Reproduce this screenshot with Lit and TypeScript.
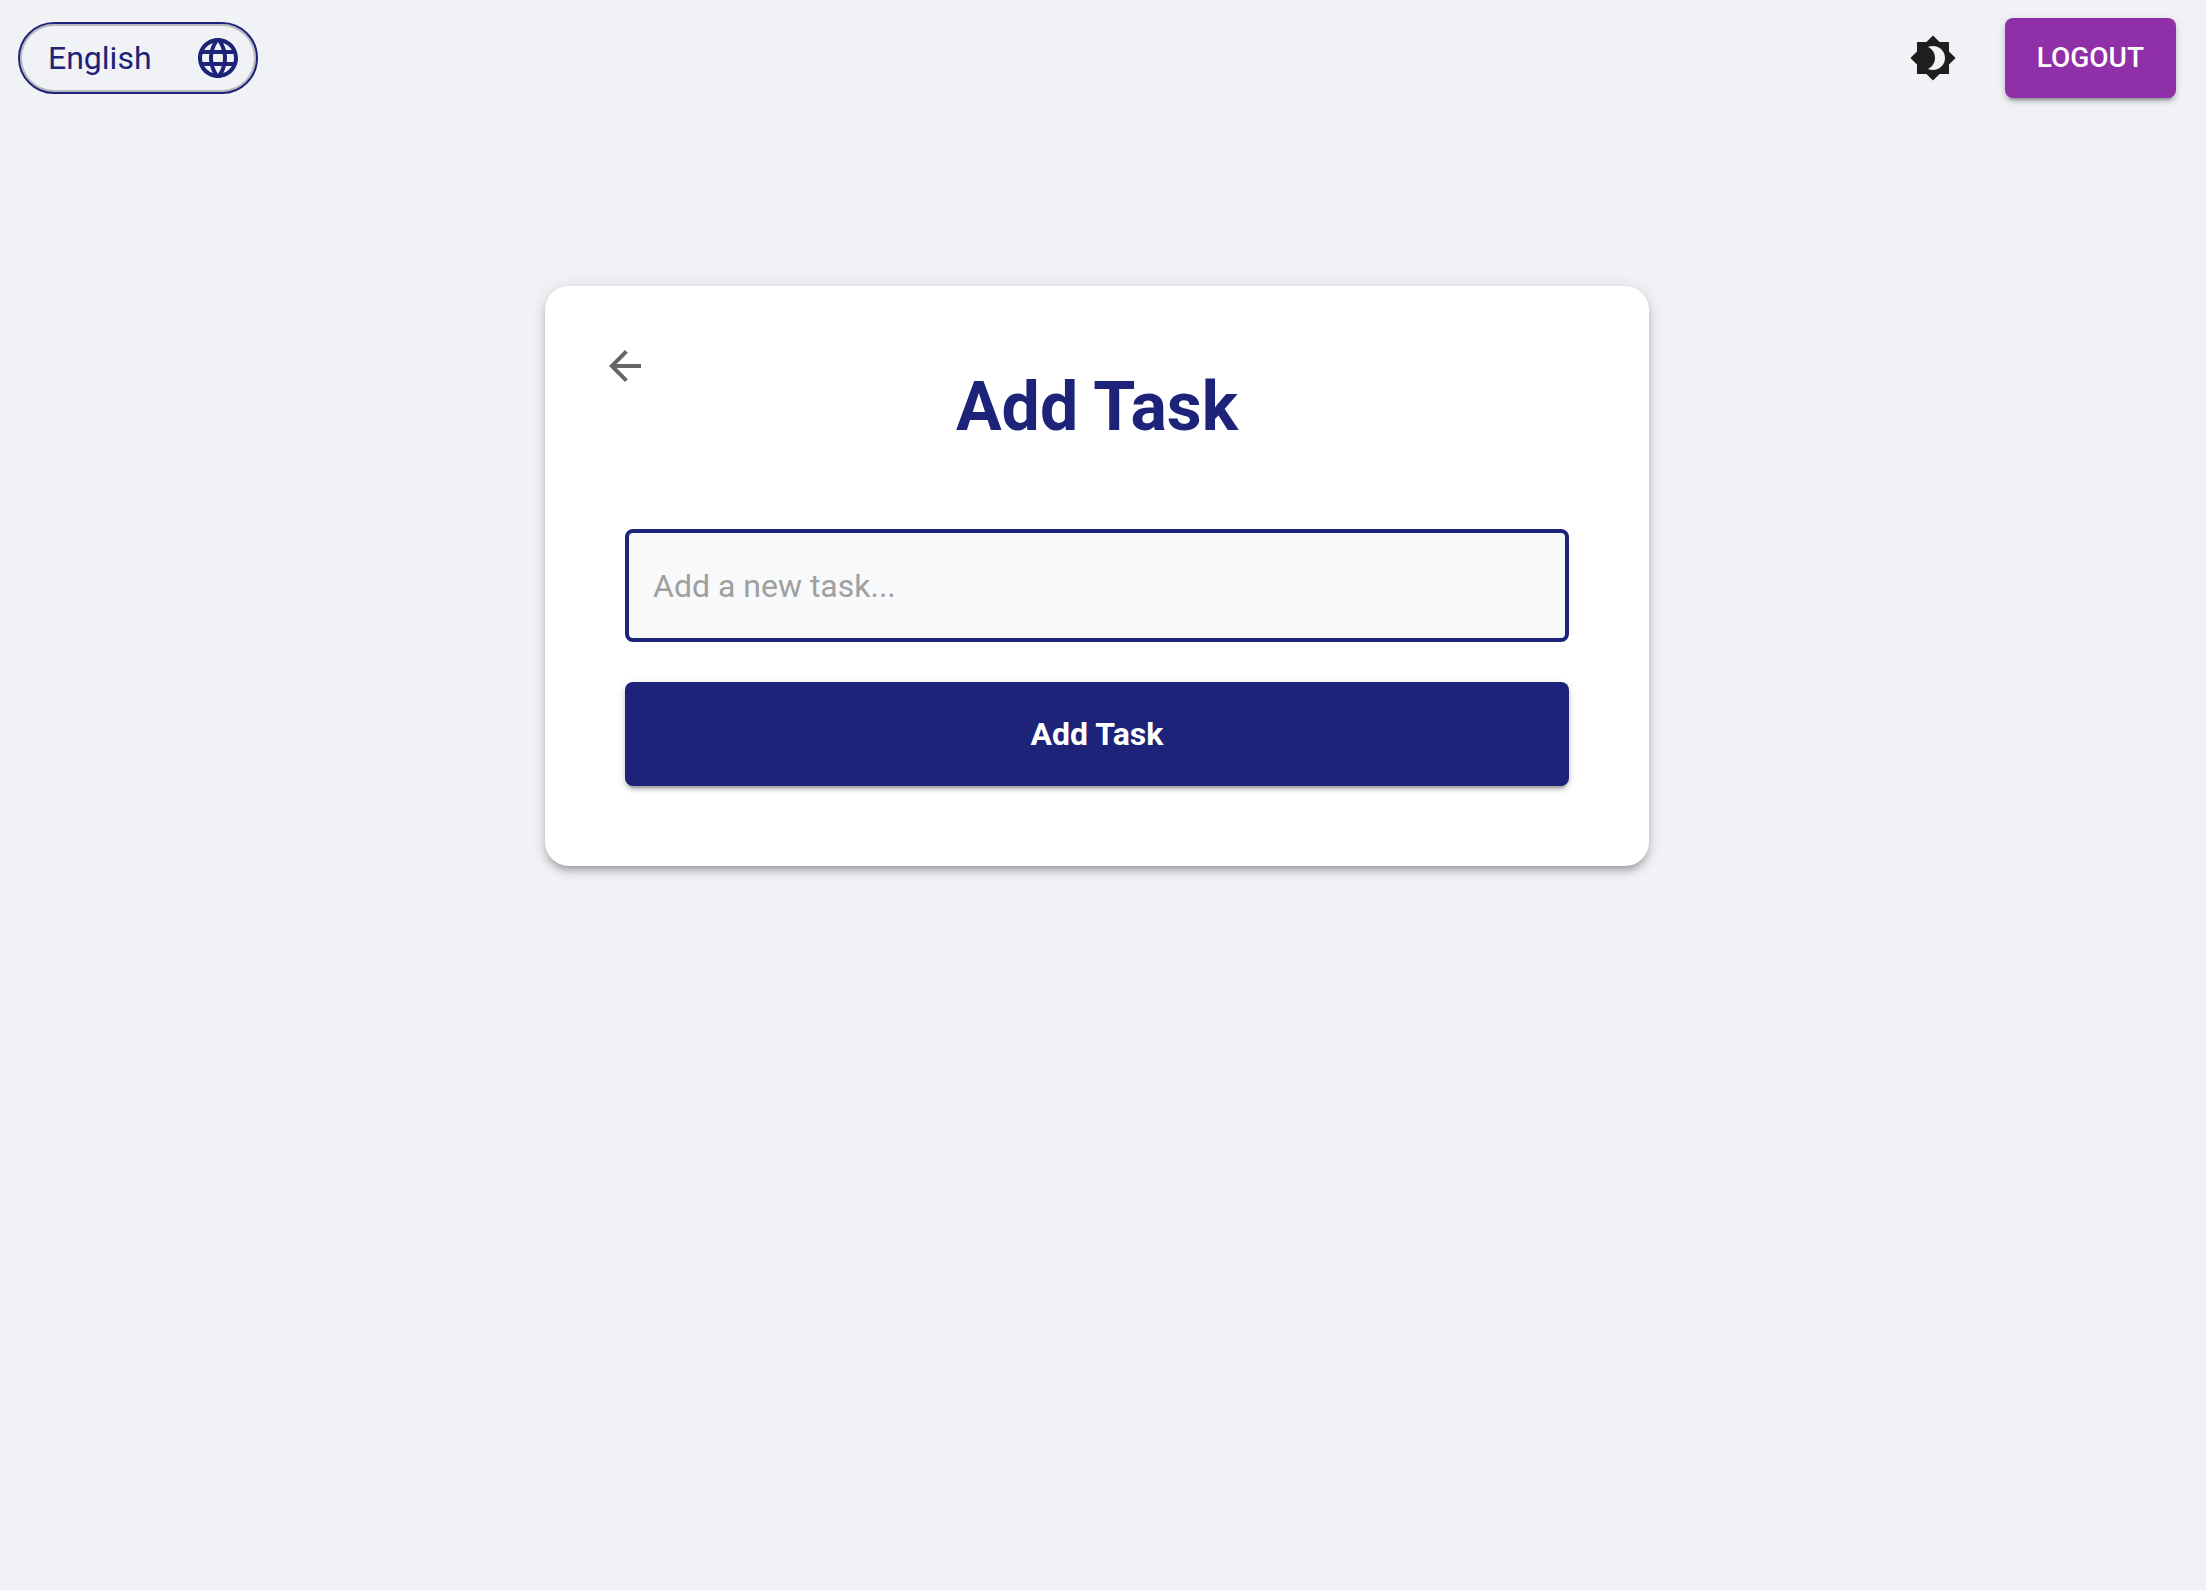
import { LitElement, html, css } from "lit";
import { customElement, state } from "lit/decorators.js";

@customElement("app-root")
export class AppRoot extends LitElement {
  @state() private task = "";

  static styles = css`
    :host {
      display: block;
      min-height: 100vh;
      box-sizing: border-box;
      padding-right: 12px;
      background: #f0f2f6;
      color: #1d2379;
      font-family: Roboto, "Liberation Sans", sans-serif;
      font-size: 32px;
    }
    * {
      box-sizing: border-box;
    }
    button,
    input,
    select {
      font-family: inherit;
      margin: 0;
    }
    button {
      border: 0;
      cursor: pointer;
    }
    .icon {
      display: block;
      width: 48px;
      height: 48px;
      fill: currentColor;
      flex: none;
    }
    .bar {
      display: flex;
      align-items: center;
      justify-content: space-between;
      padding: 18px;
    }
    .actions {
      display: flex;
      align-items: center;
      gap: 32px;
    }
    .language {
      display: flex;
      align-items: center;
      width: 240px;
      height: 72px;
      padding: 0 14px 0 28px;
      border: 2px solid #1d2379;
      border-radius: 36px;
      box-shadow: inset 0 0 0 2px #b9b9bd;
    }
    .language-select {
      appearance: none;
      flex: 1;
      min-width: 0;
      padding: 0;
      border: 0;
      outline: 0;
      background: transparent;
      color: inherit;
      font-size: 32px;
      line-height: 48px;
    }
    .icon-button {
      display: grid;
      place-items: center;
      width: 80px;
      height: 80px;
      padding: 0;
      border-radius: 50%;
      background: transparent;
      color: #1e1e1e;
    }
    .back {
      color: #666666;
    }
    .raised {
      border-radius: 8px;
      color: #ffffff;
      box-shadow:
        0 6px 2px -4px rgba(0, 0, 0, 0.2),
        0 4px 4px 0 rgba(0, 0, 0, 0.14),
        0 2px 10px 0 rgba(0, 0, 0, 0.12);
    }
    .logout {
      height: 80px;
      padding: 0 32px;
      background: #9030a8;
      font-size: 28px;
      font-weight: 500;
      line-height: 48px;
      text-transform: uppercase;
    }
    .card {
      max-width: 1104px;
      margin: 170px auto 0;
      padding: 40px 40px 80px;
      border-radius: 24px;
      background: #ffffff;
      box-shadow:
        0 6px 6px -4px rgba(0, 0, 0, 0.2),
        0 6px 8px 0 rgba(0, 0, 0, 0.14),
        0 2px 16px 0 rgba(0, 0, 0, 0.12);
    }
    .heading {
      display: grid;
      grid-template-columns: 80px 1fr 80px;
      align-items: start;
    }
    .title {
      margin: 0;
      padding: 40px 0 80px;
      font-size: 68px;
      font-weight: 700;
      line-height: 83px;
      text-align: center;
    }
    .form {
      display: flex;
      flex-direction: column;
      gap: 40px;
      padding: 0 40px;
    }
    .field {
      width: 100%;
      height: 113px;
      padding: 0 24px;
      border: 4px solid #1d2379;
      border-radius: 8px;
      outline: 0;
      background: #f8f9fb;
      color: #1d2379;
      font-size: 32px;
    }
    .field::placeholder {
      color: #9f9f9f;
      opacity: 1;
    }
    .submit {
      width: 100%;
      height: 104px;
      background: #1d2379;
      font-size: 32px;
      font-weight: 700;
    }
  `;

  private onInput(event: Event) {
    this.task = (event.target as HTMLInputElement).value;
  }

  private onSubmit(event: Event) {
    event.preventDefault();
    this.task = "";
  }

  render() {
    return html`
      <header class="bar">
        <label class="language">
          <select class="language-select" aria-label="Language">
            <option>English</option>
          </select>
          <svg class="icon" viewBox="0 0 24 24" aria-hidden="true">
            <path
              d="M11.99 2C6.47 2 2 6.48 2 12s4.47 10 9.99 10C17.52 22 22 17.52 22 12S17.52 2 11.99 2zm6.93 6h-2.95c-.32-1.25-.78-2.45-1.38-3.56 1.84.63 3.37 1.91 4.33 3.56zM12 4.04c.83 1.2 1.48 2.53 1.91 3.96h-3.82c.43-1.43 1.08-2.76 1.91-3.96zM4.26 14C4.1 13.36 4 12.69 4 12s.1-1.36.26-2h3.38c-.08.66-.14 1.32-.14 2 0 .68.06 1.34.14 2H4.26zm.82 2h2.95c.32 1.25.78 2.45 1.38 3.56-1.84-.63-3.37-1.9-4.33-3.56zm2.95-8H5.08c.96-1.66 2.49-2.93 4.33-3.56C8.81 5.55 8.35 6.75 8.03 8zM12 19.96c-.83-1.2-1.48-2.53-1.91-3.96h3.82c-.43 1.43-1.08 2.76-1.91 3.96zM14.34 14H9.66c-.09-.66-.16-1.32-.16-2 0-.68.07-1.35.16-2h4.68c.09.65.16 1.32.16 2 0 .68-.07 1.34-.16 2zm.25 5.56c.6-1.11 1.06-2.31 1.38-3.56h2.95c-.96 1.65-2.49 2.93-4.33 3.56zM16.36 14c.08-.66.14-1.32.14-2 0-.68-.06-1.34-.14-2h3.38c.16.64.26 1.31.26 2s-.1 1.36-.26 2h-3.38z"
            />
          </svg>
        </label>
        <div class="actions">
          <button class="icon-button" type="button" aria-label="Toggle theme">
            <svg class="icon" viewBox="0 0 24 24" aria-hidden="true">
              <path
                d="M20 8.69V4h-4.69L12 .69 8.69 4H4v4.69L.69 12 4 15.31V20h4.69L12 23.31 15.31 20H20v-4.69L23.31 12 20 8.69zM12 18c-.89 0-1.74-.2-2.5-.55C11.56 16.5 13 14.42 13 12s-1.44-4.5-3.5-5.45C10.26 6.2 11.11 6 12 6c3.31 0 6 2.69 6 6s-2.69 6-6 6z"
              />
            </svg>
          </button>
          <button class="raised logout" type="button">Logout</button>
        </div>
      </header>
      <main class="card">
        <div class="heading">
          <button class="icon-button back" type="button" aria-label="Back">
            <svg class="icon" viewBox="0 0 24 24" aria-hidden="true">
              <path
                d="M20 11H7.83l5.59-5.59L12 4l-8 8 8 8 1.41-1.41L7.83 13H20v-2z"
              />
            </svg>
          </button>
          <h1 class="title">Add Task</h1>
        </div>
        <form class="form" @submit=${this.onSubmit}>
          <input
            class="field"
            type="text"
            aria-label="Task"
            placeholder="Add a new task..."
            .value=${this.task}
            @input=${this.onInput}
          />
          <button class="raised submit" type="submit">Add Task</button>
        </form>
      </main>
    `;
  }
}
